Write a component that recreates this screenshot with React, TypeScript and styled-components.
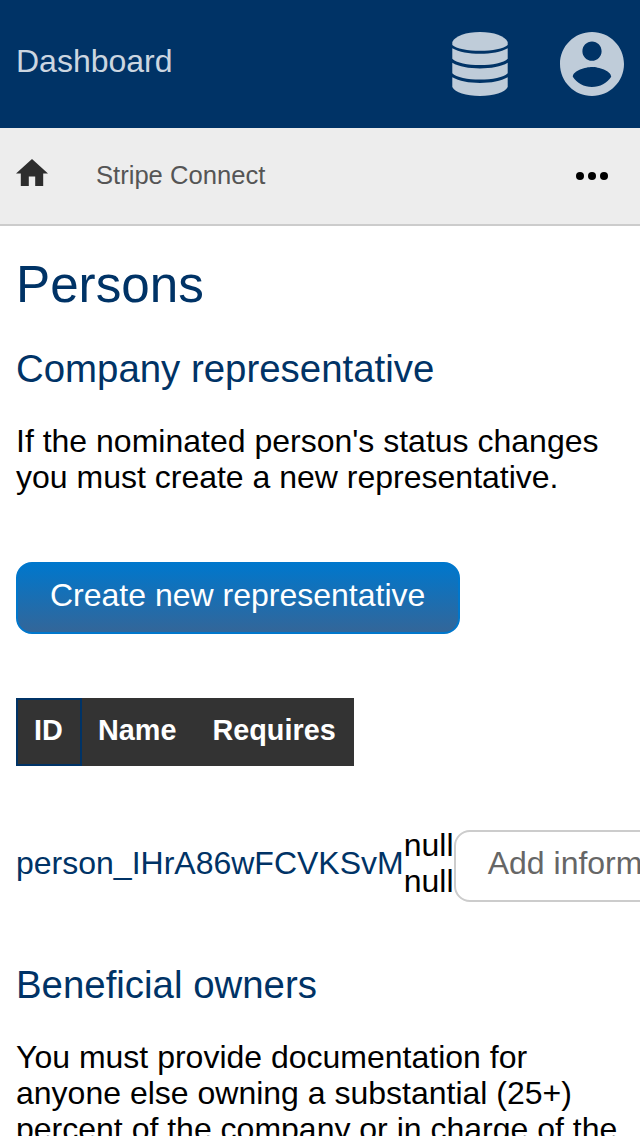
import React from 'react';
import styled, { createGlobalStyle } from 'styled-components';

const GlobalStyle = createGlobalStyle`
  *, *::before, *::after { box-sizing: border-box; }
  html, body {
    margin: 0;
    height: 100%;
    overflow: hidden;
    background: #fff;
  }
  body {
    color: #000;
    font: 32px/36px "Liberation Sans", Arial, sans-serif;
  }
`;

const Page = styled.div`
  height: 1136px;
  overflow: hidden;
`;

const Header = styled.header`
  display: flex;
  align-items: center;
  height: 128px;
  padding: 0 16px;
  background: #003366;
  color: #bfccd9;
`;

const HeaderTitle = styled.a`
  flex: 1;
  padding-bottom: 7px;
  color: #ccd6e0;
`;

const HeaderIcons = styled.nav`
  display: flex;
  gap: 48px;

  svg {
    display: block;
    width: 64px;
    height: 64px;
    fill: currentColor;
  }
`;

const Breadcrumbs = styled.nav`
  display: flex;
  align-items: center;
  height: 98px;
  padding: 0 32px 0 16px;
  background: #ededed;
  border-bottom: 2px solid #ccc;
  color: #555;
  font-size: 25.6px;
`;

const HomeIcon = styled.svg`
  display: block;
  width: 32px;
  height: 27.2px;
  margin: 0 48px 7px 0;
  fill: #2d2d2d;
`;

const Crumb = styled.span`
  flex: 1;
  padding-bottom: 3px;
`;

const MoreIcon = styled.svg`
  display: block;
  width: 32px;
  height: 8px;
`;

const Content = styled.main`
  padding: 30px 16px 0;
`;

const Title = styled.h1`
  margin: 0 0 33px;
  color: #003366;
  font-size: 51.2px;
  font-weight: 400;
  line-height: 58px;
`;

const Subtitle = styled.h2`
  margin: 0 0 32px;
  color: #003366;
  font-size: 38.4px;
  font-weight: 400;
  line-height: 44px;
`;

const Paragraph = styled.p`
  margin: 0;
`;

const Button = styled.button<{ $primary?: boolean }>`
  flex: none;
  height: 72px;
  padding: 0 33px 6px 32px;
  border: 2px solid ${(p) => (p.$primary ? '#0077cc' : '#ccc')};
  border-radius: 16px;
  background: ${(p) => (p.$primary ? 'linear-gradient(#0077cc, #336699)' : '#fff')};
  color: ${(p) => (p.$primary ? '#fff' : '#666')};
  font: inherit;
  white-space: nowrap;
`;

const Actions = styled.div`
  display: flex;
  padding: 67px 0 64px;
`;

const TableHead = styled.div`
  display: flex;
  width: 338px;
  height: 68px;
  background: #333;
  color: #fff;
  font-size: 28.8px;
  font-weight: 700;
`;

const HeadCell = styled.div<{ $active?: boolean }>`
  padding: ${(p) => (p.$active ? '12px 16px 0' : '14px 18px 0')};
  border: ${(p) => (p.$active ? '2px solid #003366' : '0')};
  min-width: 66px;

  &:nth-child(2) {
    padding-left: 16px;
  }
`;

const PersonRow = styled.div`
  display: flex;
  align-items: center;
  margin: 64px 0 61px;
`;

const PersonId = styled.a`
  margin: -3px 0 3px;
  color: #003366;
`;

const PersonName = styled.div`
  flex: none;
  width: 50px;
  margin: -3px 0 3px;
`;

const App = () => (
  <Page>
    <GlobalStyle />
    <Header>
      <HeaderTitle>Dashboard</HeaderTitle>
      <HeaderIcons>
        <svg viewBox="0 0 64 64">
          <path d="M4.3 10C7 4 18 0 32 0s25 4 27.7 10v3C56 16.8 44 18.8 32 18.8S8 16.8 4.3 13z" />
          <path d="M4.3 16.3C11 20.2 21 21.8 32 21.8s21-1.6 27.7-5.5v10.4C56 30.8 44 33 32 33S8 30.8 4.3 26.7z" />
          <path d="M4.3 30.8C11 34.8 21 36.5 32 36.5s21-1.7 27.7-5.7v10.4C56 45.4 44 47.6 32 47.6S8 45.4 4.3 41.2z" />
          <path d="M4.3 45.3C11 49.2 21 51 32 51s21-1.8 27.7-5.7V55C57 60.5 46 64 32 64S7 60.5 4.3 55z" />
        </svg>
        <svg viewBox="2 2 20 20">
          <path d="M12 2C6.48 2 2 6.48 2 12s4.48 10 10 10 10-4.48 10-10S17.52 2 12 2zm0 3c1.66 0 3 1.34 3 3s-1.34 3-3 3-3-1.34-3-3 1.34-3 3-3zm0 14.2c-2.5 0-4.71-1.28-6-3.22.03-1.99 4-3.08 6-3.08 1.99 0 5.97 1.09 6 3.08-1.29 1.94-3.5 3.22-6 3.22z" />
        </svg>
      </HeaderIcons>
    </Header>
    <Breadcrumbs>
      <HomeIcon viewBox="2 3 20 17">
        <path d="M10 20v-6h4v6h5v-8h3L12 3 2 12h3v8z" />
      </HomeIcon>
      <Crumb>Stripe Connect</Crumb>
      <MoreIcon viewBox="0 0 32 8">
        <circle cx="4" cy="4" r="4" />
        <circle cx="16" cy="4" r="4" />
        <circle cx="28" cy="4" r="4" />
      </MoreIcon>
    </Breadcrumbs>
    <Content>
      <Title>Persons</Title>
      <Subtitle>Company representative</Subtitle>
      <Paragraph>If the nominated person's status changes you must create a new representative.</Paragraph>
      <Actions>
        <Button $primary>Create new representative</Button>
      </Actions>
      <TableHead>
        <HeadCell $active>ID</HeadCell>
        <HeadCell>Name</HeadCell>
        <HeadCell>Requires</HeadCell>
      </TableHead>
      <PersonRow>
        <PersonId>person_IHrA86wFCVKSvM</PersonId>
        <PersonName>null null</PersonName>
        <Button>Add information</Button>
      </PersonRow>
      <Subtitle>Beneficial owners</Subtitle>
      <Paragraph>
        You must provide documentation for anyone else owning a substantial (25+) percent of the
        company or in charge of the
      </Paragraph>
    </Content>
  </Page>
);

export default App;
